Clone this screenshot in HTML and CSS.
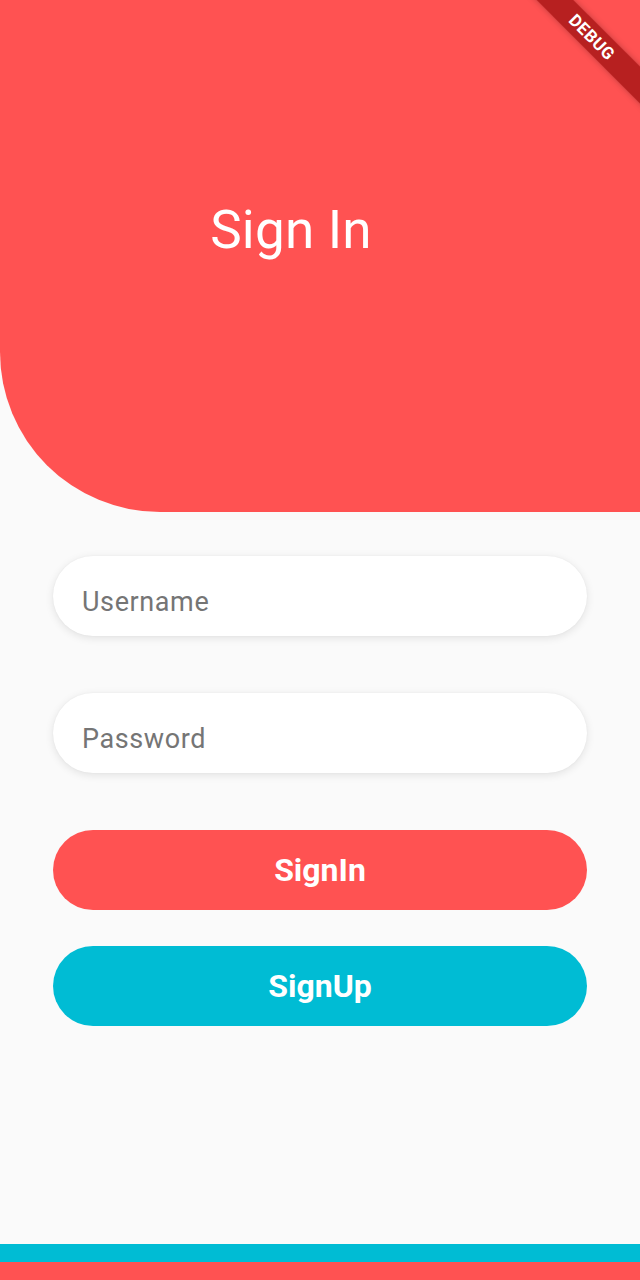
FILE: index.html
```html
<!DOCTYPE html>
<html>
<head>
<meta charset="utf-8">
<link rel="stylesheet" href="styles.css">
</head>
<body>
<div class="screen">
  <header class="hero">
    <h1 class="title">Sign In</h1>
  </header>
  <main class="form">
    <div class="field"><span class="placeholder">Username</span></div>
    <div class="field field-gap"><span class="placeholder">Password</span></div>
    <button class="btn btn-red">SignIn</button>
    <button class="btn btn-cyan">SignUp</button>
  </main>
  <footer class="bars">
    <div class="bar-cyan"></div>
    <div class="bar-red"></div>
  </footer>
  <div class="debug"><span>DEBUG</span></div>
</div>
</body>
</html>
```
FILE: styles.css
```css
* { box-sizing: border-box; }
html, body { margin: 0; padding: 0; }
body { background: #fafafa; font-family: Roboto, "Noto Sans", sans-serif; }
.screen {
  width: 640px; height: 1280px; position: relative; overflow: hidden;
  display: flex; flex-direction: column; background: #fafafa;
}
.hero {
  height: 512px; background: #ff5252;
  border-bottom-left-radius: 160px;
  display: flex; align-items: flex-start; justify-content: center;
  padding-top: 194px; padding-right: 58px;
}
.title {
  margin: 0; color: #fff; font-weight: 400; font-size: 53px; line-height: 72px;
  letter-spacing: 0.2px;
}
.form {
  flex: 1; padding: 44px 53px 0 53px;
  display: flex; flex-direction: column;
}
.field {
  height: 80px; border-radius: 40px; background: #fff;
  box-shadow: 0 2px 8px rgba(0,0,0,0.10), 0 0 2px rgba(0,0,0,0.04);
  display: flex; align-items: center; padding-left: 29px; padding-top: 12px;
}
.field-gap { margin-top: 57px; }
.placeholder { color: #757575; font-size: 27px; letter-spacing: 0.6px; }
.btn {
  height: 80px; border: none; border-radius: 40px; color: #fff;
  font-family: Roboto, sans-serif; font-weight: 700; font-size: 32px;
  padding: 0; width: 100%;
}
.btn-red { background: #ff5252; margin-top: 57px; }
.btn-cyan { background: #00bcd4; margin-top: 36px; }
.bars { display: flex; flex-direction: column; }
.bar-cyan { height: 18px; background: #00bcd4; }
.bar-red { height: 18px; background: #ff5252; }
.debug {
  position: absolute; top: 0; right: 0; width: 120px; height: 120px; overflow: hidden;
}
.debug span {
  position: absolute; top: 24px; right: -42px; width: 180px; height: 26px;
  transform: rotate(45deg);
  background: rgba(165, 20, 20, 0.8);
  color: #fff; font-weight: 700; font-size: 17px; line-height: 26px; text-align: center;
  letter-spacing: 0.5px;
  box-shadow: 0 0 6px rgba(0,0,0,0.25);
}
```
